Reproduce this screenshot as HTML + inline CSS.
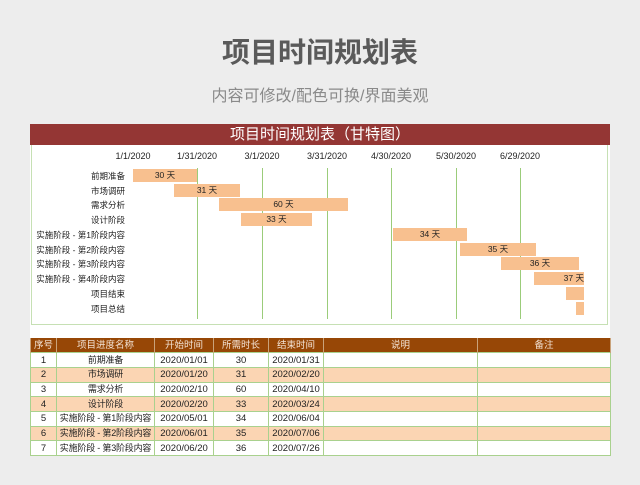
<!DOCTYPE html>
<html><head><meta charset="utf-8"><style>
*{margin:0;padding:0;box-sizing:border-box}
body{width:640px;height:485px;background:#ededed;position:relative;overflow:hidden;font-family:"Liberation Sans","Noto Sans CJK SC",sans-serif}
.abs{position:absolute}
.t1{left:0;width:640px;top:36px;text-align:center;font-size:28px;color:#5a5a5a;font-weight:bold;line-height:34px}
.t2{left:0;width:640px;top:86px;text-align:center;font-size:16px;color:#8a8a8a;line-height:22px}
.panel{left:30px;top:124px;width:580px;height:331px;background:#fff}
.bar{left:30px;top:124px;width:580px;height:21px;background:#943634;color:#fff;text-align:center;font-size:15px;line-height:21px}
.chart{left:31px;top:145px;width:577px;height:180px;border:1px solid #c6e0b4;border-top:none}
.date{top:151px;font-size:9px;color:#222;width:60px;margin-left:-30px;text-align:center}
.vl{top:168px;height:151px;width:1px;background:#9bcc7a}
.lab{left:30px;width:95px;text-align:right;font-size:8.5px;color:#222;line-height:14px}
.g{background:#f8c08f;height:13px;font-size:8.5px;color:#222;text-align:center;line-height:13px;white-space:nowrap;overflow:hidden}
table{position:absolute;left:30px;top:338px;width:580px;border-collapse:collapse;font-size:9.5px;color:#222;table-layout:fixed}
td,th{border:1px solid #a9d18e;height:14.7px;padding:0;text-align:center;white-space:nowrap;line-height:13px;overflow:hidden}
td.n{font-size:9px;letter-spacing:-0.2px}
th{background:#974706;color:#f3e3d5;font-weight:normal;border-color:#c9a27a;border-top:none;border-bottom:none}
tr.o td{background:#fbd5b3}
</style></head><body>
<div class="abs t1">项目时间规划表</div>
<div class="abs t2">内容可修改/配色可换/界面美观</div>
<div class="abs panel"></div>
<div class="abs bar">项目时间规划表（甘特图）</div>
<div class="abs chart"></div>
<div class="abs date" style="left:133px">1/1/2020</div>
<div class="abs date" style="left:197px">1/31/2020</div>
<div class="abs date" style="left:262px">3/1/2020</div>
<div class="abs date" style="left:327px">3/31/2020</div>
<div class="abs date" style="left:391px">4/30/2020</div>
<div class="abs date" style="left:456px">5/30/2020</div>
<div class="abs date" style="left:520px">6/29/2020</div>
<div class="abs vl" style="left:197px"></div>
<div class="abs vl" style="left:262px"></div>
<div class="abs vl" style="left:327px"></div>
<div class="abs vl" style="left:391px"></div>
<div class="abs vl" style="left:456px"></div>
<div class="abs vl" style="left:520px"></div>
<div class="abs lab" style="top:169px">前期准备</div>
<div class="abs lab" style="top:184px">市场调研</div>
<div class="abs lab" style="top:198px">需求分析</div>
<div class="abs lab" style="top:213px">设计阶段</div>
<div class="abs lab" style="top:228px">实施阶段 - 第1阶段内容</div>
<div class="abs lab" style="top:243px">实施阶段 - 第2阶段内容</div>
<div class="abs lab" style="top:257px">实施阶段 - 第3阶段内容</div>
<div class="abs lab" style="top:272px">实施阶段 - 第4阶段内容</div>
<div class="abs lab" style="top:287px">项目结束</div>
<div class="abs lab" style="top:302px">项目总结</div>
<div class="abs g" style="left:133px;top:169px;width:64px">30 天</div>
<div class="abs g" style="left:174px;top:184px;width:66px">31 天</div>
<div class="abs g" style="left:219px;top:198px;width:129px">60 天</div>
<div class="abs g" style="left:241px;top:213px;width:71px">33 天</div>
<div class="abs g" style="left:393px;top:228px;width:74px">34 天</div>
<div class="abs g" style="left:460px;top:243px;width:76px">35 天</div>
<div class="abs g" style="left:501px;top:257px;width:78px">36 天</div>
<div class="abs g" style="left:534px;top:272px;width:50px;text-align:right">37 天</div>
<div class="abs g" style="left:566px;top:287px;width:18px"></div>
<div class="abs g" style="left:576px;top:302px;width:8px"></div>
<table>
<colgroup><col style="width:26px"><col style="width:98px"><col style="width:59px"><col style="width:55px"><col style="width:55px"><col style="width:154px"><col style="width:133px"></colgroup>
<tr><th>序号</th><th>项目进度名称</th><th>开始时间</th><th>所需时长</th><th>结束时间</th><th>说明</th><th>备注</th></tr>
<tr><td>1</td><td class="n">前期准备</td><td>2020/01/01</td><td>30</td><td>2020/01/31</td><td></td><td></td></tr>
<tr class="o"><td>2</td><td class="n">市场调研</td><td>2020/01/20</td><td>31</td><td>2020/02/20</td><td></td><td></td></tr>
<tr><td>3</td><td class="n">需求分析</td><td>2020/02/10</td><td>60</td><td>2020/04/10</td><td></td><td></td></tr>
<tr class="o"><td>4</td><td class="n">设计阶段</td><td>2020/02/20</td><td>33</td><td>2020/03/24</td><td></td><td></td></tr>
<tr><td>5</td><td class="n">实施阶段 - 第1阶段内容</td><td>2020/05/01</td><td>34</td><td>2020/06/04</td><td></td><td></td></tr>
<tr class="o"><td>6</td><td class="n">实施阶段 - 第2阶段内容</td><td>2020/06/01</td><td>35</td><td>2020/07/06</td><td></td><td></td></tr>
<tr><td>7</td><td class="n">实施阶段 - 第3阶段内容</td><td>2020/06/20</td><td>36</td><td>2020/07/26</td><td></td><td></td></tr>
</table>
</body></html>
